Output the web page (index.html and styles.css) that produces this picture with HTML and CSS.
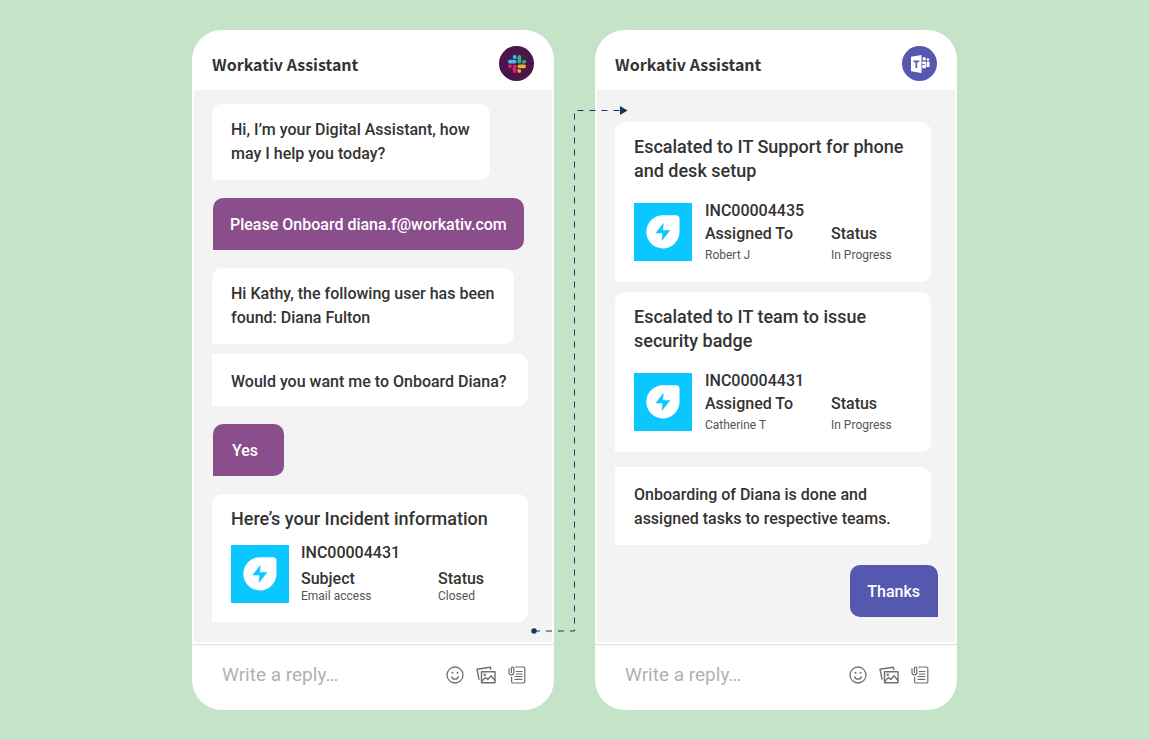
FILE: index.html
```html
<!DOCTYPE html>
<html lang="en">
<head>
<meta charset="utf-8">
<meta name="viewport" content="width=device-width, initial-scale=1">
<title>Workativ Assistant</title>
<link rel="stylesheet" href="styles.css">
</head>
<body>
<svg class="sprite" aria-hidden="true">
  <symbol id="bolt-logo" viewBox="0 0 58 58">
    <path fill="#fff" d="M29 12.200H42a3.500 3.500 0 0 1 3.500 3.500V29A16.600 16.600 0 1 1 29 12.200z"/>
    <path fill="#0ac7ff" stroke="#0ac7ff" stroke-width=".5" stroke-linejoin="round" d="M29.300 20.600L21.900 30H28.700L28 37.400L35.900 27.400H28.700z"/>
  </symbol>
  <symbol id="smile" viewBox="0 0 18 18">
    <g fill="none" stroke="#6f6f6f" stroke-width="1.300" stroke-linecap="round">
      <circle cx="9" cy="9" r="8"/>
      <path d="M5.600 10.800a3.600 3.600 0 0 0 6.800 0"/>
    </g>
    <circle cx="6.500" cy="6.700" r="1" fill="#6f6f6f"/>
    <circle cx="11.500" cy="6.700" r="1" fill="#6f6f6f"/>
  </symbol>
  <symbol id="photos" viewBox="0 0 20 18">
    <g fill="none" stroke="#6f6f6f" stroke-width="1.400" stroke-linejoin="round" stroke-linecap="round">
      <path d="M3 13.200L1 3.200L14.400 1.200l.4 2"/>
      <rect x="5.500" y="5.700" width="13.500" height="11"/>
      <path d="M6 15l3.500-3.500 2.300 2L15 9.800l3.800 4.500"/>
    </g>
    <circle cx="8.800" cy="8.700" r="1.200" fill="#6f6f6f"/>
  </symbol>
  <symbol id="note" viewBox="0 0 18 18">
    <g fill="none" stroke="#6f6f6f" stroke-width="1.200" stroke-linecap="round" stroke-linejoin="round">
      <path d="M7.500 1h7.700a1.600 1.600 0 0 1 1.600 1.600v12.800a1.600 1.600 0 0 1-1.600 1.600H5.200a1.600 1.600 0 0 1-1.600-1.600V11"/>
      <path d="M1 2.500v4a2.400 2.400 0 0 0 4.800 0V2.400a1.200 1.200 0 0 0-2.400 0v4"/>
      <path d="M8.300 5.500h5.700M8.300 8h5.700M7 10.500h7M7 13.300h7"/>
    </g>
  </symbol>
</svg>

<main class="stage">
  <section class="phone" aria-label="Slack conversation">
    <header class="phone-header">
      <h2 class="phone-title">Workativ Assistant</h2>
      <span class="brand brand-slack">
        <svg class="slack-mark" viewBox="0 0 24 24" aria-hidden="true">
          <path fill="#e01e5a" d="M5.042 15.165a2.528 2.528 0 0 1-2.520 2.523A2.528 2.528 0 0 1 0 15.165a2.527 2.527 0 0 1 2.522-2.520h2.520v2.520zM6.313 15.165a2.527 2.527 0 0 1 2.521-2.520 2.527 2.527 0 0 1 2.521 2.520v6.313A2.528 2.528 0 0 1 8.834 24a2.528 2.528 0 0 1-2.521-2.522v-6.313z"/>
          <path fill="#36c5f0" d="M8.834 5.042a2.528 2.528 0 0 1-2.521-2.520A2.528 2.528 0 0 1 8.834 0a2.528 2.528 0 0 1 2.521 2.522v2.520H8.834zM8.834 6.313a2.528 2.528 0 0 1 2.521 2.521 2.528 2.528 0 0 1-2.521 2.521H2.522A2.528 2.528 0 0 1 0 8.834a2.528 2.528 0 0 1 2.522-2.521h6.312z"/>
          <path fill="#2eb67d" d="M18.956 8.834a2.528 2.528 0 0 1 2.522-2.521A2.528 2.528 0 0 1 24 8.834a2.528 2.528 0 0 1-2.522 2.521h-2.522V8.834zM17.688 8.834a2.528 2.528 0 0 1-2.523 2.521 2.527 2.527 0 0 1-2.520-2.521V2.522A2.527 2.527 0 0 1 15.165 0a2.528 2.528 0 0 1 2.523 2.522v6.312z"/>
          <path fill="#ecb22e" d="M15.165 18.956a2.528 2.528 0 0 1 2.523 2.522A2.528 2.528 0 0 1 15.165 24a2.527 2.527 0 0 1-2.520-2.522v-2.522h2.520zM15.165 17.688a2.527 2.527 0 0 1-2.520-2.523 2.526 2.526 0 0 1 2.520-2.520h6.313A2.527 2.527 0 0 1 24 15.165a2.528 2.528 0 0 1-2.522 2.523h-6.313z"/>
        </svg>
      </span>
    </header>

    <div class="thread">
      <p class="bubble">Hi, I’m your Digital Assistant, how<br>may I help you today?</p>
      <p class="bubble own">Please Onboard diana.f@workativ.com</p>
      <p class="bubble">Hi Kathy, the following user has been<br>found: Diana Fulton</p>
      <p class="bubble follow wide">Would you want me to Onboard Diana?</p>
      <p class="bubble own short">Yes</p>
      <article class="card compact">
        <h3 class="card-title">Here’s your Incident information</h3>
        <div class="ticket">
          <svg class="ticket-logo" aria-hidden="true"><use href="#bolt-logo"/></svg>
          <div class="ticket-info">
            <p class="ticket-id">INC00004431</p>
            <dl class="facts">
              <div class="fact"><dt>Subject</dt><dd>Email access</dd></div>
              <div class="fact"><dt>Status</dt><dd>Closed</dd></div>
            </dl>
          </div>
        </div>
      </article>
    </div>

    <form class="reply">
      <input class="reply-input" type="text" aria-label="Reply" placeholder="Write a reply…">
      <button class="tool" type="button" aria-label="Emoji"><svg class="icon"><use href="#smile"/></svg></button>
      <button class="tool" type="button" aria-label="Pictures"><svg class="icon icon-wide"><use href="#photos"/></svg></button>
      <button class="tool" type="button" aria-label="Attach note"><svg class="icon"><use href="#note"/></svg></button>
    </form>
  </section>

  <section class="phone" aria-label="Teams conversation">
    <header class="phone-header">
      <h2 class="phone-title">Workativ Assistant</h2>
      <span class="brand brand-teams">
        <svg class="teams-mark" viewBox="0 0 20 20" aria-hidden="true">
          <path fill="#fff" fill-rule="evenodd" d="M1 2.800L11.500 1v18L1 17.200zM3.500 6.600v1.700h2v5.800h1.700V8.300h2V6.500z"/>
          <circle cx="14.200" cy="4.800" r="1.700" fill="#fff"/>
          <circle cx="17.900" cy="5.600" r="1.300" fill="#fff"/>
          <path fill="#fff" d="M12.300 7.500h3.600v6.800h-3.600zM16.600 7.700h2.900v5.300h-2.900z"/>
          <path stroke="#5558af" stroke-width=".8" d="M12 10.500h3"/>
        </svg>
      </span>
    </header>

    <div class="thread thread-late">
      <article class="card">
        <h3 class="card-title">Escalated to IT Support for phone and desk setup</h3>
        <div class="ticket">
          <svg class="ticket-logo" aria-hidden="true"><use href="#bolt-logo"/></svg>
          <div class="ticket-info">
            <p class="ticket-id">INC00004435</p>
            <dl class="facts">
              <div class="fact"><dt>Assigned To</dt><dd>Robert J</dd></div>
              <div class="fact"><dt>Status</dt><dd>In Progress</dd></div>
            </dl>
          </div>
        </div>
      </article>
      <article class="card">
        <h3 class="card-title">Escalated to IT team to issue security badge</h3>
        <div class="ticket">
          <svg class="ticket-logo" aria-hidden="true"><use href="#bolt-logo"/></svg>
          <div class="ticket-info">
            <p class="ticket-id">INC00004431</p>
            <dl class="facts">
              <div class="fact"><dt>Assigned To</dt><dd>Catherine T</dd></div>
              <div class="fact"><dt>Status</dt><dd>In Progress</dd></div>
            </dl>
          </div>
        </div>
      </article>
      <p class="bubble closing">Onboarding of Diana is done and<br>assigned tasks to respective teams.</p>
      <p class="bubble thanks">Thanks</p>
    </div>

    <form class="reply">
      <input class="reply-input" type="text" aria-label="Reply" placeholder="Write a reply…">
      <button class="tool" type="button" aria-label="Emoji"><svg class="icon"><use href="#smile"/></svg></button>
      <button class="tool" type="button" aria-label="Pictures"><svg class="icon icon-wide"><use href="#photos"/></svg></button>
      <button class="tool" type="button" aria-label="Attach note"><svg class="icon"><use href="#note"/></svg></button>
    </form>
  </section>

  <svg class="connector" viewBox="0 0 100 530" aria-hidden="true">
    <path fill="none" stroke="#14365f" stroke-width="1" stroke-dasharray="6 6" d="M5 527H45.500V6.500H92"/>
    <circle cx="5" cy="527" r="2.700" fill="#14365f"/>
    <path fill="#14365f" d="M91 2l7.500 4.500L91 11z"/>
  </svg>
</main>
</body>
</html>
```

FILE: styles.css
```css
* {
  box-sizing: border-box;
}

body {
  margin: 0;
  min-height: 100vh;
  background: #c5e3c7;
  color: #333;
  font-family: Roboto, "Liberation Sans", sans-serif;
}

h2, h3, p, dl, dd {
  margin: 0;
}

.sprite {
  display: none;
}

.stage {
  position: relative;
  display: flex;
  justify-content: center;
  gap: 41px;
  max-width: 826px;
  margin: 0 auto;
  padding: 30px 31px 30px 30px;
}

.phone {
  flex: 1 1 0;
  min-width: 0;
  display: flex;
  flex-direction: column;
  background: #fff;
  border-radius: 30px;
}

.phone-header {
  display: flex;
  align-items: center;
  justify-content: space-between;
  padding: 16px 20px 9px;
}

.phone-title {
  font-family: "Noto Sans CJK SC", "Noto Sans", sans-serif;
  font-size: 16px;
  line-height: 24px;
  font-weight: 700;
}

.brand {
  display: grid;
  place-items: center;
  width: 35px;
  height: 35px;
  border-radius: 50%;
}

.brand-slack {
  background: #4a154b;
}

.brand-teams {
  background: #5558af;
}

.slack-mark {
  width: 18px;
  height: 18px;
}

.teams-mark {
  width: 20px;
  height: 20px;
}

.thread {
  flex: 1;
  display: flex;
  flex-direction: column;
  align-items: flex-start;
  gap: 18px;
  margin: 0 2px 2px;
  padding: 14px 17px 20px 18px;
  background: #f3f3f3;
}

.thread-late {
  gap: 10px;
  padding-top: 32px;
}

.bubble {
  padding: 14px 20px 14px 19px;
  border-radius: 10px 10px 10px 0;
  background: #fff;
  font-size: 16px;
  line-height: 24px;
  font-weight: 500;
}

.own {
  margin-left: 1px;
  padding: 15px 17px 13px;
  background: #8b4e8c;
  color: #fff;
}

.short {
  min-width: 71px;
  padding-left: 19px;
}

.follow {
  margin-top: -8px;
  border-top-left-radius: 0;
}

.wide {
  width: 100%;
  max-width: 316px;
  padding: 16px 19px 12px;
}

.closing {
  width: 100%;
  max-width: 316px;
  margin-top: 5px;
  padding: 16px 19px 14px;
  border-top-left-radius: 0;
}

.thanks {
  align-self: flex-end;
  margin-top: 10px;
  padding: 15px 18px 13px 17px;
  border-radius: 10px 10px 0 10px;
  background: #5558af;
  color: #fff;
}

.card {
  width: 100%;
  max-width: 316px;
  padding: 13px 19px 17px;
  border-radius: 10px 10px 10px 0;
  background: #fff;
}

.card-title {
  font-size: 18px;
  line-height: 24px;
  font-weight: 500;
}

.ticket {
  display: flex;
  align-items: flex-start;
  gap: 13px;
  margin-top: 16px;
}

.ticket-logo {
  flex: none;
  width: 58px;
  height: 58px;
  margin-top: 4px;
  background: #0ac7ff;
}

.ticket-info {
  flex: 1;
  font-size: 16px;
  line-height: 23px;
  font-weight: 500;
}

.facts {
  display: grid;
  grid-template-columns: 126px 1fr;
}

.fact dd {
  color: #555;
  font-size: 12px;
  line-height: 20px;
  font-weight: 400;
}

.compact {
  padding-bottom: 19px;
}

.compact .ticket {
  gap: 12px;
  margin-top: 10px;
}

.compact .facts {
  grid-template-columns: 137px 1fr;
  margin-top: 3px;
}

.compact .fact dd {
  line-height: 12px;
}

.reply {
  display: flex;
  align-items: center;
  gap: 12px;
  padding: 15px 28px 21px 30px;
  border-top: 1px solid #e3dcdf;
}

.reply-input {
  flex: 1;
  min-width: 0;
  height: 29px;
  padding: 0;
  border: 0;
  outline: 0;
  background: none;
  color: #333;
  font: 400 19px Roboto, "Liberation Sans", sans-serif;
}

.reply-input::placeholder {
  color: #b1b1b1;
  opacity: 1;
}

.tool {
  display: flex;
  padding: 0;
  border: 0;
  background: none;
  cursor: pointer;
}

.icon {
  width: 18px;
  height: 18px;
}

.icon-wide {
  width: 20px;
}

/* Dashed arrow that runs over both panels */
.connector {
  position: absolute;
  top: 104px;
  left: calc(50% - 46px);
  width: 100px;
  height: 530px;
  pointer-events: none;
}
```
